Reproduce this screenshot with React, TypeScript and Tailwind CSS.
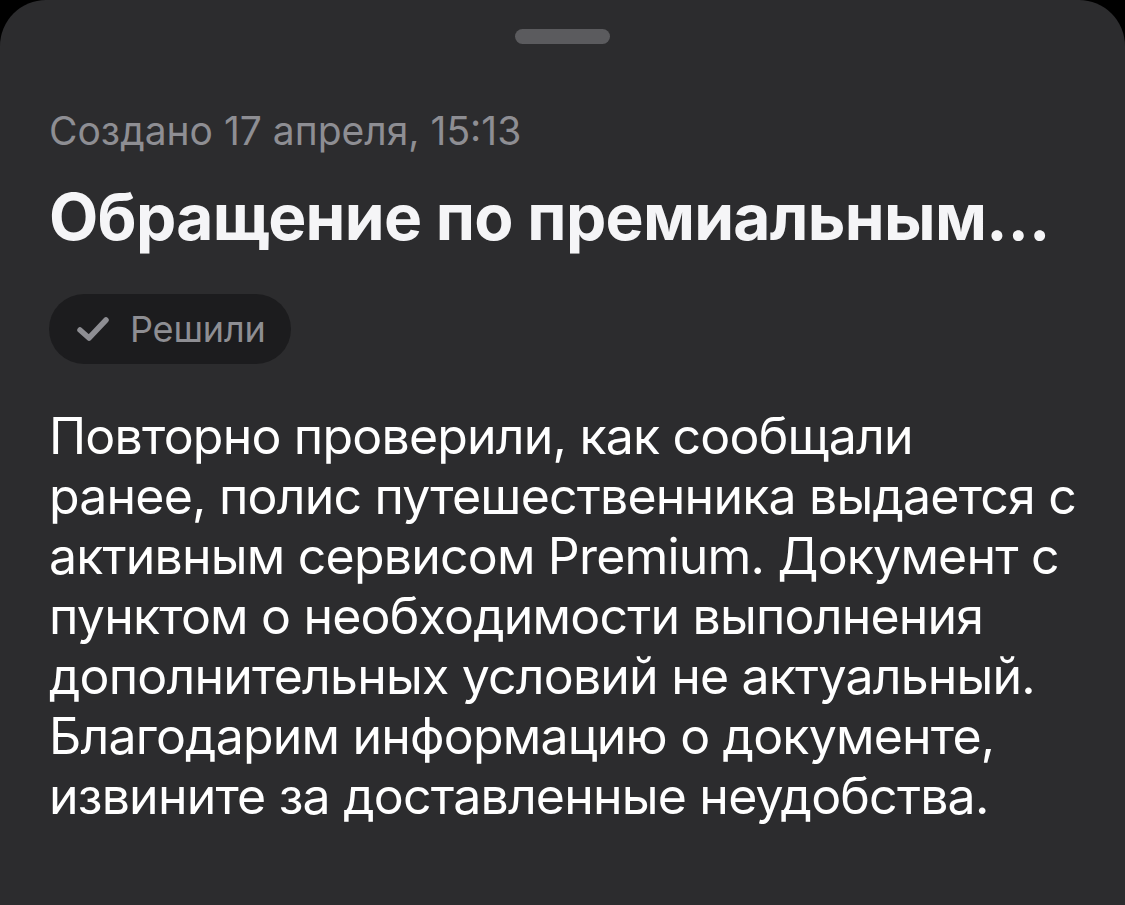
import React from "react";

export default function App() {
  const lines = [
    "Повторно проверили, как сообщали",
    "ранее, полис путешественника выдается с",
    "активным сервисом Premium. Документ с",
    "пунктом о необходимости выполнения",
    "дополнительных условий не актуальный.",
    "Благодарим информацию о документе,",
    "извините за доставленные неудобства.",
  ];
  return (
    <div className="w-[1125px] h-[905px] bg-black overflow-hidden" style={{ fontFamily: "Inter, 'Noto Sans', sans-serif" }}>
      <div className="w-full h-[960px] bg-[#2c2c2e] rounded-t-[46px] flex flex-col px-[49px]">
        <div className="flex justify-center pt-[29px]">
          <div className="w-[95px] h-[15px] rounded-full bg-[#5b5b5e]" />
        </div>
        <div className="mt-[64px] text-[39px] leading-[46px] text-[#8e8e93] tracking-[0px]">Создано 17 апреля, 15:13</div>
        <div className="mt-[25px] text-[64px] leading-[76px] font-bold text-[#f5f5f7] tracking-[-0.7px]">Обращение по премиальным…</div>
        <div className="mt-[39px] flex">
          <div className="h-[70px] rounded-full bg-[#1c1c1e] flex items-center pl-[27px] pr-[26px] gap-[20px]">
            <svg width="34" height="28" viewBox="0 0 34 28" fill="none">
              <path d="M4 15 L13 23 L30 5" stroke="#8e8e93" strokeWidth="5.5" strokeLinecap="round" strokeLinejoin="round" />
            </svg>
            <span className="text-[36px] text-[#8e8e93] tracking-[-0.2px]">Решили</span>
          </div>
        </div>
        <div className="mt-[42px] text-[50px] leading-[60px] text-white tracking-[-0.8px]">
          {lines.map((l, i) => (
            <div key={i} className="whitespace-nowrap">{l}</div>
          ))}
        </div>
      </div>
    </div>
  );
}
